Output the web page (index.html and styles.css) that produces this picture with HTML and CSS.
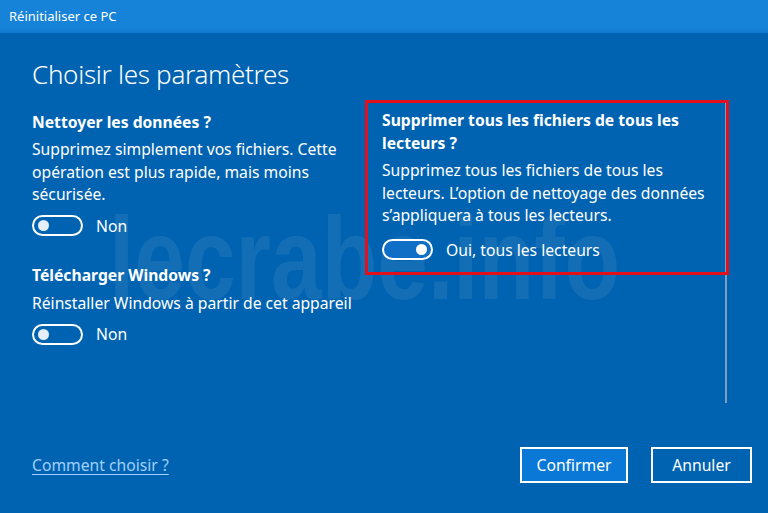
FILE: index.html
```html
<!DOCTYPE html>
<html lang="fr">
<head>
<meta charset="utf-8">
<title>Réinitialiser ce PC</title>
<link rel="stylesheet" href="styles.css">
</head>
<body>
<div class="window">
  <div class="titlebar">Réinitialiser ce PC</div>
  <div class="content">
    <h1 class="page-title">Choisir les paramètres</h1>
    <div class="columns">
      <div class="col col-left">
        <section class="option">
          <h2 class="opt-title">Nettoyer les données ?</h2>
          <p class="opt-desc">Supprimez simplement vos fichiers. Cette opération est plus rapide, mais moins sécurisée.</p>
          <div class="toggle-row">
            <span class="toggle"><span class="knob"></span></span>
            <span class="toggle-label">Non</span>
          </div>
        </section>
        <section class="option option-2">
          <h2 class="opt-title">Télécharger Windows ?</h2>
          <p class="opt-desc">Réinstaller Windows à partir de cet appareil</p>
          <div class="toggle-row">
            <span class="toggle"><span class="knob"></span></span>
            <span class="toggle-label">Non</span>
          </div>
        </section>
      </div>
      <div class="col col-right">
        <section class="option highlight">
          <h2 class="opt-title">Supprimer tous les fichiers de tous les lecteurs ?</h2>
          <p class="opt-desc">Supprimez tous les fichiers de tous les lecteurs. L’option de nettoyage des données s’appliquera à tous les lecteurs.</p>
          <div class="toggle-row">
            <span class="toggle on"><span class="knob"></span></span>
            <span class="toggle-label">Oui, tous les lecteurs</span>
          </div>
        </section>
      </div>
      <div class="scrollbar"></div>
    </div>
    <div class="footer">
      <a class="help-link" href="#">Comment choisir ?</a>
      <div class="buttons">
        <button class="btn btn-primary">Confirmer</button>
        <button class="btn">Annuler</button>
      </div>
    </div>
  </div>
  <div class="watermark">lecrabe.info</div>
</div>
</body>
</html>
```

FILE: styles.css
```css
* { box-sizing: border-box; }
html, body { margin: 0; padding: 0; }
body {
  width: 768px;
  height: 513px;
  overflow: hidden;
  background: #0063b1;
  font-family: "Noto Sans", "Open Sans", sans-serif;
  color: #ffffff;
}
.window {
  position: relative;
  width: 768px;
  height: 513px;
  display: flex;
  flex-direction: column;
  background: #0063b1;
}
.titlebar {
  height: 33px;
  flex: 0 0 33px;
  background: linear-gradient(#1682d8, #1682d8 85%, #0f79cf);
  font-size: 13px;
  line-height: 33px;
  padding-left: 9px;
  color: #ffffff;
}
.content {
  flex: 1;
  display: flex;
  flex-direction: column;
  padding: 0 16px 0 32px;
  position: relative;
  z-index: 1;
}
.page-title {
  margin: 23px 0 0 0;
  font-weight: 300;
  font-size: 26px;
  line-height: 36px;
  letter-spacing: -0.3px;
}
.columns {
  position: relative;
  display: flex;
  margin-top: 8px;
  height: 303px;
}
.col-left {
  width: 333px;
  padding-top: 11px;
}
.col-right {
  width: 364px;
}
.option-2 { margin-top: 27px; }
.opt-title {
  margin: 0;
  font-size: 15.7px;
  font-weight: 700;
  line-height: 23px;
}
.opt-desc {
  margin: 4px 0 0 0;
  font-size: 15.7px;
  line-height: 22.5px;
  width: 322px;
}
.option-2 .opt-desc { width: 333px; margin-top: 5px; }
.toggle-row {
  display: flex;
  align-items: center;
  gap: 13px;
  margin-top: 9px;
  height: 22px;
}
.toggle {
  width: 51px;
  height: 21px;
  border: 2px solid #ffffff;
  border-radius: 11px;
  display: flex;
  align-items: center;
  padding: 0 4px;
}
.knob {
  width: 11px;
  height: 11px;
  border-radius: 50%;
  background: #ffffff;
}
.toggle:not(.on) .knob { background: #e6eef8; }
.toggle.on {
  justify-content: flex-end;
  background: #0f6fc6;
}
.toggle-label {
  font-size: 15.7px;
}
.highlight {
  border: 3px solid #e3101c;
  height: 175px;
  padding: 6px 14px 0 14px;
  position: relative;
  z-index: 2;
}
.highlight .opt-title { width: 325px; line-height: 23px; }
.highlight .opt-desc { width: 338px; margin-top: 4px; }
.highlight .toggle-row { margin-top: 12px; }
.scrollbar {
  position: absolute;
  left: 693px;
  top: 0;
  width: 2px;
  height: 303px;
  background: #7f9fc0;
}
.footer {
  display: flex;
  align-items: center;
  justify-content: space-between;
  margin-top: 44px;
}
.help-link {
  color: #9fd0ff;
  font-size: 15.7px;
  text-decoration: underline;
  text-underline-offset: 3px;
}
.buttons {
  display: flex;
  gap: 23px;
}
.btn {
  font-family: inherit;
  font-size: 15.7px;
  color: #ffffff;
  background: transparent;
  border: 2px solid #ffffff;
  height: 36px;
  padding: 0;
  width: 101px;
}
.btn-primary {
  background: #0a78d7;
  width: 108px;
}
.watermark {
  position: absolute;
  left: 109px;
  top: 201px;
  font-family: "Liberation Sans", Arial, sans-serif;
  font-weight: 700;
  font-size: 116px;
  line-height: 1;
  color: rgba(255, 255, 255, 0.075);
  pointer-events: none;
  z-index: 0;
  transform: scaleX(0.785);
  transform-origin: left top;
  white-space: nowrap;
}
```
